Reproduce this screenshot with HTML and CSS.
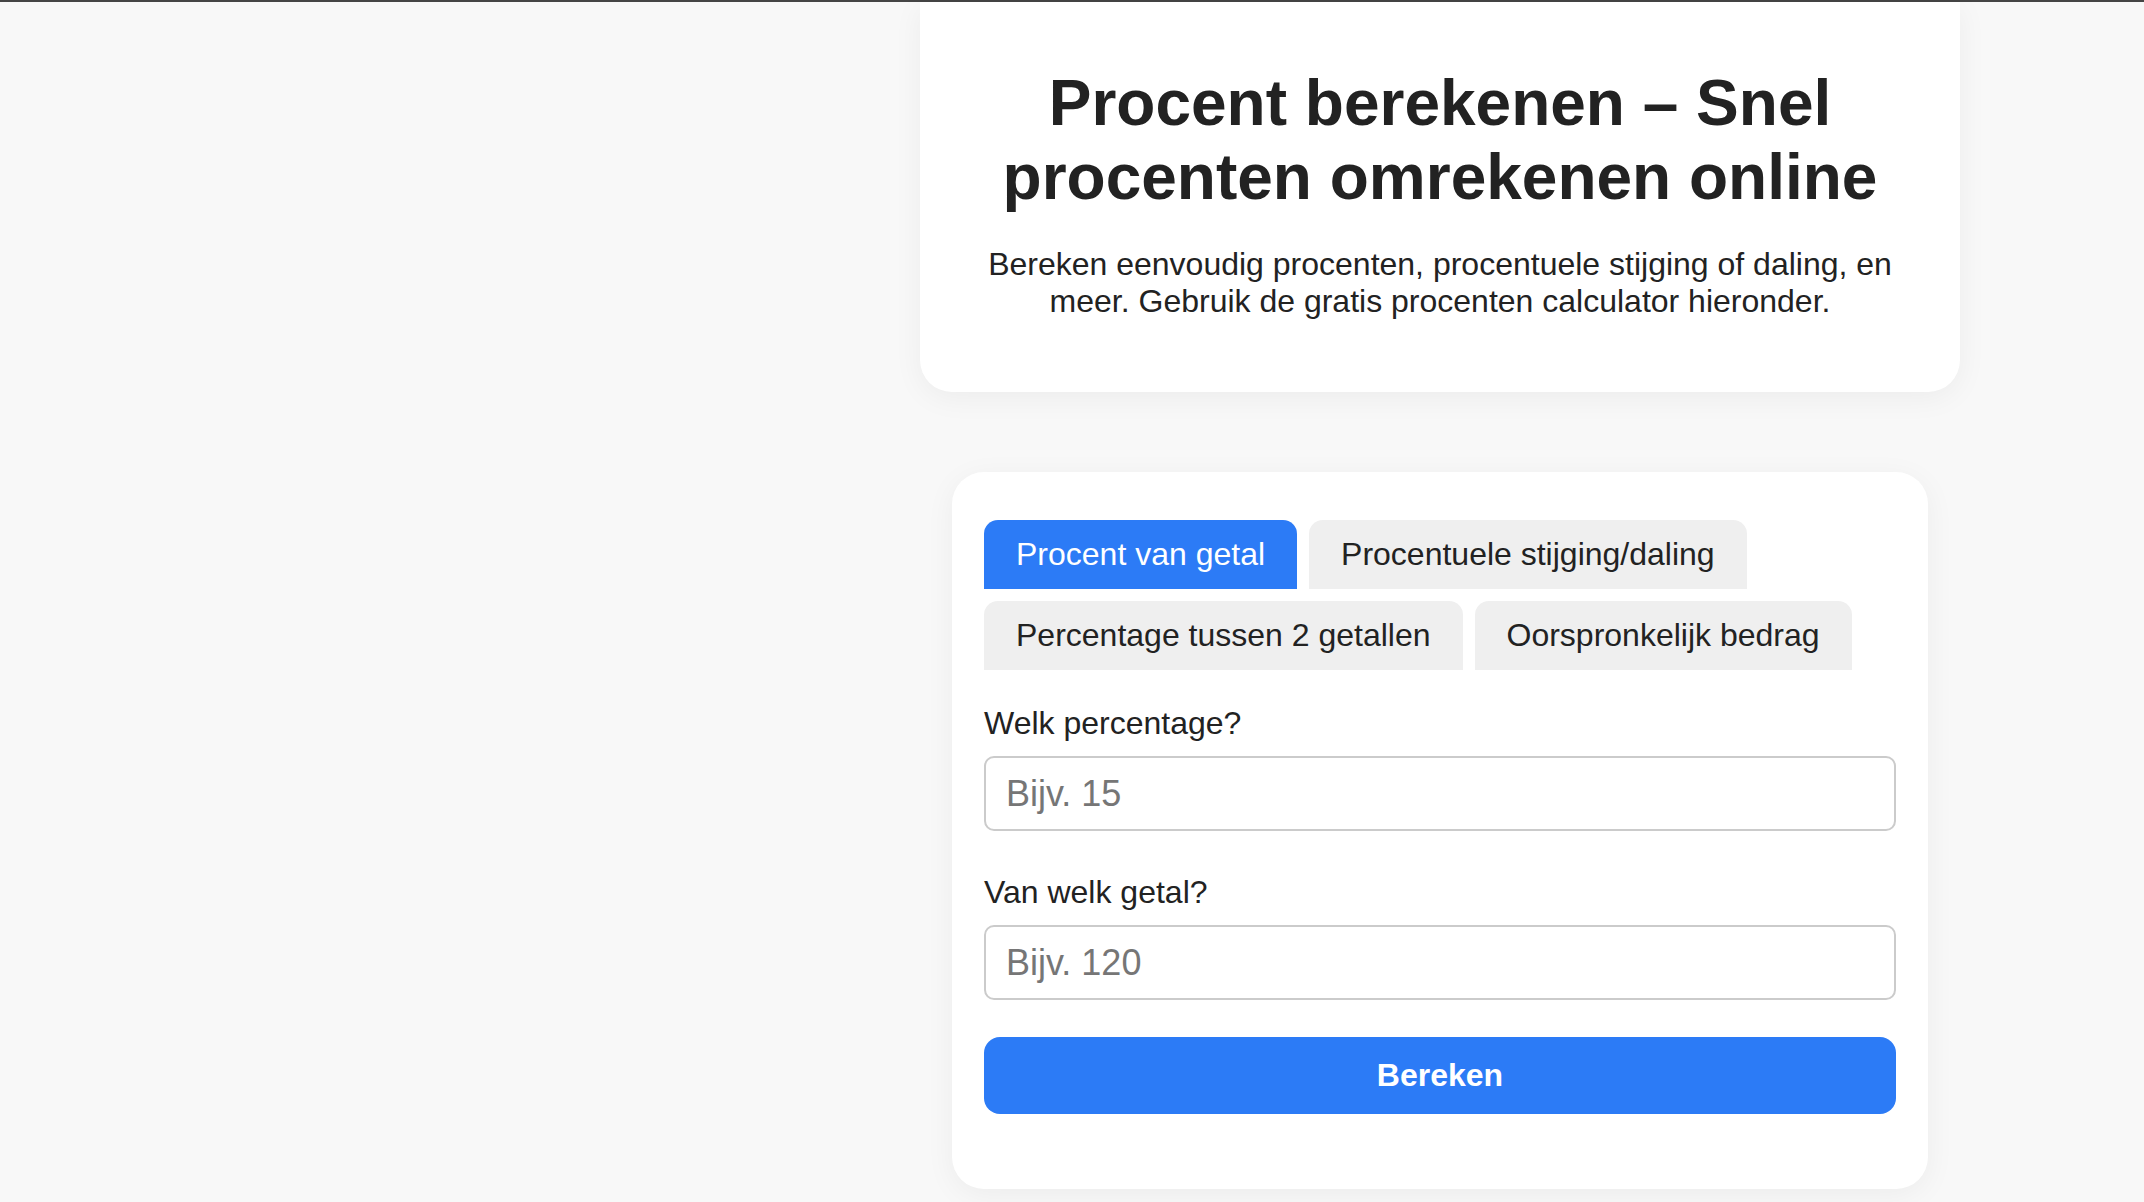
FILE: index.html
```html
<!DOCTYPE html>
<html lang="nl">
<head>
<meta charset="utf-8">
<title>Procent berekenen</title>
<link rel="stylesheet" href="styles.css">
</head>
<body>
<div class="topline"></div>
<div class="page">
  <main class="column">
    <header class="hero">
      <h1 class="hero-title">Procent berekenen – Snel procenten omrekenen online</h1>
      <p class="hero-text">Bereken eenvoudig procenten, procentuele stijging of daling, en meer. Gebruik de gratis procenten calculator hieronder.</p>
    </header>
    <section class="calc">
      <div class="tabs">
        <button class="tab tab-active" type="button">Procent van getal</button>
        <button class="tab" type="button">Procentuele stijging/daling</button>
        <button class="tab" type="button">Percentage tussen 2 getallen</button>
        <button class="tab" type="button">Oorspronkelijk bedrag</button>
      </div>
      <div class="field">
        <label class="field-label" for="pct">Welk percentage?</label>
        <input class="field-input" id="pct" type="text" placeholder="Bijv. 15">
      </div>
      <div class="field field-second">
        <label class="field-label" for="num">Van welk getal?</label>
        <input class="field-input" id="num" type="text" placeholder="Bijv. 120">
      </div>
      <button class="submit" type="button">Bereken</button>
    </section>
  </main>
</div>
</body>
</html>
```

FILE: styles.css
```css
* { box-sizing: border-box; }

html, body {
  margin: 0;
  padding: 0;
  background: #f8f8f8;
  font-family: "Liberation Sans", Arial, Helvetica, sans-serif;
  color: #222;
}

body { height: 1202px; overflow: hidden; }

.topline {
  height: 2px;
  background: #454545;
}

.page {
  display: flex;
  justify-content: flex-start;
  padding-left: 920px;
}

.column {
  width: 1040px;
  display: flex;
  flex-direction: column;
}

.hero {
  background: #fff;
  border-radius: 0 0 32px 32px;
  padding: 64px 40px 72px;
  text-align: center;
  box-shadow: 0 6px 30px rgba(0, 0, 0, 0.05);
}

.hero-title {
  margin: 0 0 32px;
  font-size: 64px;
  font-weight: 700;
  line-height: normal;
  color: #222;
}

.hero-text {
  margin: 0;
  font-size: 32px;
  line-height: normal;
  color: #222;
}

.calc {
  margin: 80px 32px 0;
  background: #fff;
  border-radius: 32px;
  padding: 48px 32px 75px;
  box-shadow: 0 6px 30px rgba(0, 0, 0, 0.05);
}

.tabs {
  display: flex;
  flex-wrap: wrap;
  gap: 12px;
  margin-bottom: 35px;
}

.tab {
  font-family: inherit;
  font-size: 32px;
  line-height: normal;
  padding: 16px 32px;
  border: 0;
  border-radius: 14px 14px 0 0;
  background: #efefef;
  color: #222;
  cursor: pointer;
}

.tab-active {
  background: #2c7bf6;
  color: #fff;
}

.field {
  display: flex;
  flex-direction: column;
}

.field-second { margin-top: 43px; }

.field-label {
  font-size: 32px;
  line-height: normal;
  margin-bottom: 14px;
  color: #222;
}

.field-input {
  height: 75px;
  font-family: inherit;
  font-size: 36px;
  padding: 0 20px;
  border: 2px solid #cbcbcb;
  border-radius: 10px;
  background: #fff;
  color: #222;
  outline: none;
}

.field-input::placeholder { color: #767676; }

.submit {
  margin-top: 37px;
  width: 100%;
  font-family: inherit;
  font-size: 32px;
  font-weight: 700;
  line-height: normal;
  padding: 20px;
  border: 0;
  border-radius: 16px;
  background: #2c7bf6;
  color: #fff;
  cursor: pointer;
}
```
